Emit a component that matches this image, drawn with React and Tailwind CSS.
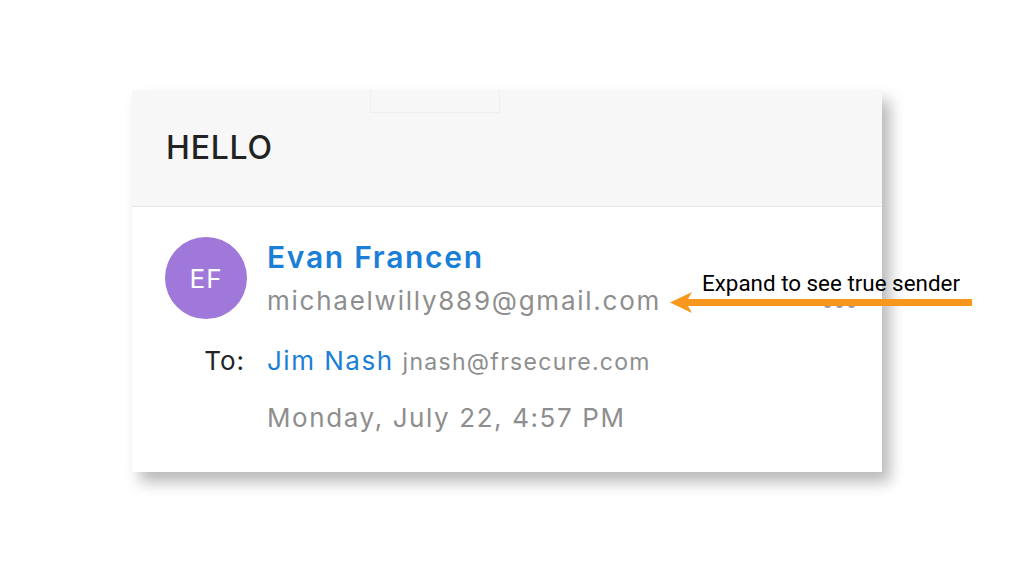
import React from "react";

export default function App() {
  return (
    <div className="relative w-[1030px] h-[579px] bg-white overflow-hidden" style={{ fontFamily: "Inter, 'Liberation Sans', sans-serif" }}>
      <div className="pt-[90px] pl-[132px]">
        <div className="relative w-[750px] h-[382px] bg-white shadow-[8px_10px_14px_rgba(0,0,0,0.28)] flex flex-col">
          <div className="relative h-[117px] bg-[#f7f7f7] border-b border-[#e6e6e6] flex items-center pl-[34px]">
            <div className="absolute left-[238px] top-0 w-[130px] h-[23px] border border-[#efefef] border-t-0"></div>
            <span className="text-[32px] text-[#222] leading-none font-medium tracking-[0.8px]">HELLO</span>
          </div>
          <div className="relative flex flex-col pl-[33px] pt-[30px]">
            <div className="flex">
              <div className="w-[82px] h-[82px] rounded-full bg-[#a078da] flex items-center justify-center text-white text-[26px] tracking-[1px]">EF</div>
              <div className="ml-[20px] flex flex-col">
                <span className="text-[30px] leading-[40px] font-semibold text-[#1b7fd8] tracking-[1.7px]">Evan Francen</span>
                <span className="text-[26px] leading-[36px] mt-[6px] text-[#8e8e8e] tracking-[1.75px]">michaelwilly889@gmail.com</span>
              </div>
            </div>
            <div className="flex items-baseline mt-[24px]">
              <span className="w-[80px] text-right text-[26px] leading-[36px] text-[#222] tracking-[1px]">To:</span>
              <span className="ml-[22px] text-[26px] leading-[36px] text-[#1b7fd8] tracking-[1.5px]">Jim Nash</span>
              <span className="ml-[9px] text-[23px] leading-[36px] text-[#8e8e8e] tracking-[1.3px]">jnash@frsecure.com</span>
            </div>
            <div className="flex mt-[20px] pl-[102px]">
              <span className="text-[26px] leading-[36px] text-[#8e8e8e] tracking-[1.6px]">Monday, July 22, 4:57 PM</span>
            </div>
            <div className="absolute right-[27px] top-[94px] flex gap-[5px]">
              <span className="w-[7px] h-[7px] rounded-full bg-[#9a9a9a]"></span>
              <span className="w-[7px] h-[7px] rounded-full bg-[#9a9a9a]"></span>
              <span className="w-[7px] h-[7px] rounded-full bg-[#9a9a9a]"></span>
            </div>
          </div>
        </div>
      </div>
      <div className="absolute left-[668px] top-[270px] w-[306px] h-[44px]">
        <span className="absolute left-[34px] top-[-1px] text-[22.4px] leading-[28px] text-black whitespace-nowrap" style={{ fontFamily: "Roboto, 'Liberation Sans', sans-serif" }}>Expand to see true sender</span>
        <svg className="absolute left-0 top-[20px]" width="306" height="24" viewBox="0 0 306 24">
          <rect x="18" y="9" width="286" height="7" fill="#f7971e" />
          <polygon points="2,12.5 24,2 18,12.5 24,23" fill="#f7971e" />
        </svg>
      </div>
    </div>
  );
}
